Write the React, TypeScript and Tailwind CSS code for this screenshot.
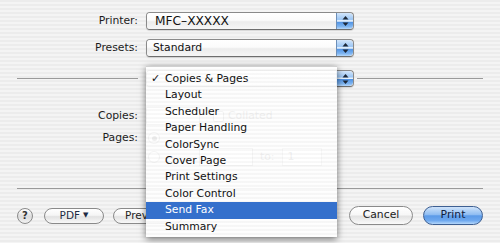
const pinstripe =
  "bg-[repeating-linear-gradient(180deg,#ececec_0px,#ececec_2px,#f4f4f4_2px,#f4f4f4_4px)]";

function Arrows() {
  return (
    <div className="w-[17px] h-full shrink-0 rounded-r-[4px] border-l border-[#6d8fb8] bg-[linear-gradient(180deg,#d3e6fb_0%,#9cc6f4_40%,#e9f3fd_48%,#e9f3fd_52%,#4f92e4_56%,#7fb5f0_85%,#b6d8fb_100%)] flex items-center justify-center">
      <svg width="7" height="12" viewBox="0 0 7 12">
        <path d="M3.5 1 L6.5 4.5 H0.5 Z" fill="#1d2838" />
        <path d="M3.5 11 L6.5 7.5 H0.5 Z" fill="#1d2838" />
      </svg>
    </div>
  );
}

function Popup({ value, big }: { value?: string; big?: boolean }) {
  return (
    <div className="ml-[8px] w-[208px] h-full flex rounded-[4px] border border-[#8a8a8a] border-b-[#6e6e6e] overflow-hidden shadow-[0_1px_1px_rgba(0,0,0,0.12)]">
      <div className="flex-1 flex items-center bg-[linear-gradient(180deg,#ffffff_0%,#fbfbfb_45%,#ececec_55%,#f6f6f6_100%)]">
        {big ? (
          <span className="pl-[8px] text-[12.2px] text-[#111]">{value}</span>
        ) : (
          <span className="pl-[6px] text-[#111]">{value}</span>
        )}
      </div>
      <Arrows />
    </div>
  );
}

const menuItems = [
  "Copies & Pages",
  "Layout",
  "Scheduler",
  "Paper Handling",
  "ColorSync",
  "Cover Page",
  "Print Settings",
  "Color Control",
  "Send Fax",
  "Summary",
];

export default function App() {
  return (
    <div
      className={`relative w-[500px] h-[243px] overflow-hidden ${pinstripe} font-['DejaVu_Sans',sans-serif] text-[10.8px] text-[#1c1c1c] pt-[12px]`}
    >
      {/* Printer / Presets */}
      <div className="flex items-center h-[18px]">
        <div className="w-[138px] text-right">Printer:</div>
        <Popup value="MFC–XXXXX" big />
      </div>
      <div className="flex items-center h-[18px] mt-[9px]">
        <div className="w-[138px] text-right">Presets:</div>
        <Popup value="Standard" />
      </div>

      {/* Section popup with rule (its label is covered by the open menu) */}
      <div className="flex items-center h-[17px] mt-[13px] px-[17px]">
        <div className="w-[121px] h-px bg-[#9a9a9a]" />
        <Popup />
        <div className="flex-1 h-px ml-[3px] bg-[#9a9a9a]" />
      </div>

      {/* Copies */}
      <div className="flex items-center h-[18px] mt-[20px]">
        <div className="w-[138px] text-right">Copies:</div>
        <div className="ml-[8px] w-[54px] h-[18px] border border-[#9a9a9a] bg-white" />
        <div className="ml-[13px] w-[11px] h-[11px] border border-[#8a8a8a] rounded-[2px] bg-white" />
        <span className="ml-[4px] text-[#666]">Collated</span>
      </div>

      {/* Pages */}
      <div className="flex items-center h-[18px] mt-[4px]">
        <div className="w-[138px] text-right">Pages:</div>
        <div className="ml-[10px] w-[12px] h-[12px] rounded-full border border-[#8a8a8a] bg-white flex items-center justify-center">
          <div className="w-[5px] h-[5px] rounded-full bg-[#555]" />
        </div>
      </div>
      <div className="flex items-center h-[18px] mt-[1px] pl-[148px] text-[#666]">
        <div className="w-[12px] h-[12px] rounded-full border border-[#8a8a8a] bg-white" />
        <div className="ml-[39px] w-[54px] h-[18px] border border-[#9a9a9a] bg-white" />
        <span className="ml-[7px]">to:</span>
        <div className="ml-[8px] w-[40px] h-[18px] border border-[#b0b0b0] bg-white flex items-center pl-[4px]">
          1
        </div>
      </div>

      {/* Bottom rule */}
      <div className="mx-[17px] mt-[22px] h-px bg-[#9a9a9a]" />

      {/* Buttons */}
      <div className="flex items-center h-[19px] mt-[17px] px-[17px]">
        <div className="w-[16px] h-[16px] rounded-full border border-[#8a8a8a] bg-[linear-gradient(180deg,#ffffff,#dcdcdc_55%,#f2f2f2)] flex items-center justify-center text-[10px] font-bold text-[#333]">
          ?
        </div>
        <div className="ml-[11px] w-[60px] h-[16px] rounded-full border border-[#8a8a8a] bg-[linear-gradient(180deg,#ffffff,#f5f5f5_45%,#e2e2e2_55%,#f8f8f8)] flex items-center justify-center text-[10.5px] text-[#1d2a44]">
          PDF <span className="ml-[3px] text-[7px]">▼</span>
        </div>
        <div className="ml-[9px] w-[70px] h-[16px] rounded-full border border-[#8a8a8a] bg-[linear-gradient(180deg,#ffffff,#f5f5f5_45%,#e2e2e2_55%,#f8f8f8)] flex items-center pl-[11px] text-[10.5px] text-[#222]">
          Preview
        </div>
        <div className="ml-auto w-[64px] h-[19px] rounded-full border border-[#8a8a8a] bg-[linear-gradient(180deg,#ffffff,#f7f7f7_45%,#e3e3e3_55%,#fafafa)] flex items-center justify-center text-[#222]">
          Cancel
        </div>
        <div className="ml-[10px] w-[60px] h-[19px] rounded-full border border-[#3d5f92] bg-[linear-gradient(180deg,#cfe3fa_0%,#8fbdf2_45%,#5b9ae8_52%,#6fa9ef_80%,#b4d7fb_100%)] flex items-center justify-center text-[#10203d]">
          Print
        </div>
      </div>

      {/* Open pop-up menu */}
      <div className="absolute left-[146px] top-[66px] w-[191px] h-[171px] pt-[4px] border-t border-[#d0d0d0] bg-[repeating-linear-gradient(180deg,rgba(255,255,255,0.9)_0px,rgba(255,255,255,0.9)_2px,rgba(247,247,247,0.9)_2px,rgba(247,247,247,0.9)_4px)] shadow-[0_2px_7px_rgba(0,0,0,0.55)]">
        {menuItems.map((item, i) => (
          <div
            key={item}
            className={
              item === "Send Fax"
                ? "relative h-[16.4px] flex items-center pl-[19px] bg-[#3470cc] text-white"
                : "relative h-[16.4px] flex items-center pl-[19px] text-[#111]"
            }
          >
            {i === 0 && (
              <span className="absolute left-[5px] text-[11px]">✓</span>
            )}
            {item}
          </div>
        ))}
      </div>
    </div>
  );
}
